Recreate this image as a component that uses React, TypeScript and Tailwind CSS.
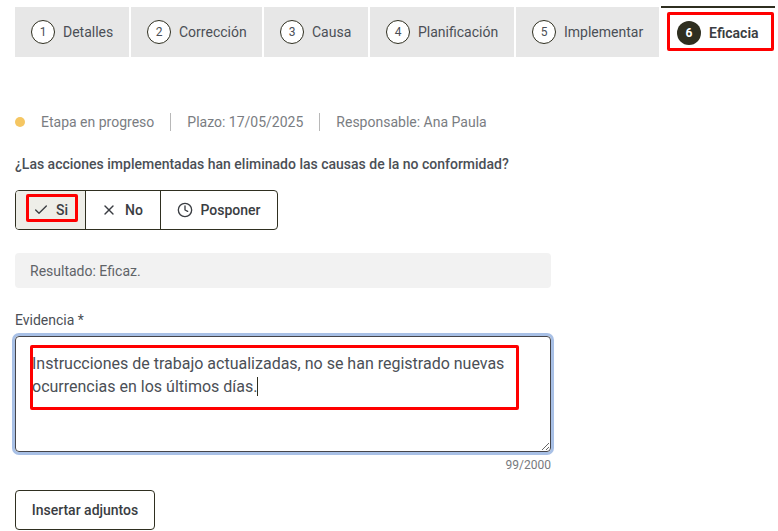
import { Check, Clock, X } from "lucide-react";

const steps = [
  { n: 1, label: "Detalles", width: "w-[114px]" },
  { n: 2, label: "Corrección", width: "w-[131px]" },
  { n: 3, label: "Causa", width: "w-[104px]" },
  { n: 4, label: "Planificación", width: "w-[144px]" },
  { n: 5, label: "Implementar", width: "w-[143px]" },
];

export default function App() {
  return (
    <div className="h-[531px] w-[778px] overflow-hidden bg-white pl-[15px] pt-[6px] font-['Roboto',sans-serif] text-[#4b4f56]">
      <div className="flex gap-[2px]">
        {steps.map((step) => (
          <div
            key={step.n}
            className={`mt-px flex h-[50px] items-center gap-2 bg-[#e7e7e7] pl-4 text-sm ${step.width}`}
          >
            <span className="flex h-6 w-6 items-center justify-center rounded-full border border-[#2f2f20] bg-white text-xs">
              {step.n}
            </span>
            {step.label}
          </div>
        ))}
        <div className="relative flex h-[51px] w-[114px] items-center gap-2 border-t-2 border-[#2f2f20] pl-4 text-sm font-semibold text-[#3a3d42]">
          <span className="flex h-6 w-6 items-center justify-center rounded-full bg-[#2f2f20] text-xs font-bold text-white">
            6
          </span>
          Eficacia
          <div className="absolute left-[6px] top-[4px] h-[39px] w-[107px] rounded-[2px] border-[3px] border-[#ff0000]" />
        </div>
      </div>

      <div className="mt-[56px] flex h-[18px] items-center text-sm text-[#7a7d82]">
        <span className="h-[10px] w-[10px] rounded-full bg-[#f5c662]" />
        <span className="ml-4">Etapa en progreso</span>
        <span className="mx-4 h-[18px] w-px bg-[#b8b8b8]" />
        <span>Plazo: 17/05/2025</span>
        <span className="mx-4 h-[18px] w-px bg-[#b8b8b8]" />
        <span>Responsable: Ana Paula</span>
      </div>

      <p className="mt-[24px] h-[18px] text-sm font-medium leading-[18px]">
        ¿Las acciones implementadas han eliminado las causas de la no conformidad?
      </p>

      <div className="mt-[17px] flex h-10 w-[263px] rounded border border-[#2f2f20] text-sm font-medium text-[#3a3d42]">
        <div className="relative flex w-[69px] items-center justify-center gap-[7px] rounded-l-[3px] bg-[#eeeee8]">
          <Check size={16} strokeWidth={2} />
          Si
          <div className="absolute left-[10px] top-[3px] h-[28px] w-[52px] rounded-[2px] border-[3px] border-[#ff0000]" />
        </div>
        <div className="flex w-[75px] items-center justify-center gap-2 border-l border-[#2f2f20] pr-[2px]">
          <X size={16} strokeWidth={2} />
          No
        </div>
        <div className="flex flex-1 items-center justify-center gap-[7px] border-l border-[#2f2f20]">
          <Clock size={16} strokeWidth={2} />
          Posponer
        </div>
      </div>

      <div className="mt-[23px] flex h-[35px] w-[536px] items-center rounded bg-[#f2f2f2] pl-[15px] text-sm text-[#5f6368]">
        Resultado: Eficaz.
      </div>

      <p className="mt-[23px] h-[18px] text-sm leading-[18px]">Evidencia *</p>

      <div className="relative mt-[7px] h-[116px] w-[536px] resize overflow-auto rounded border border-[#45454a] py-[15px] pl-4 pr-4 text-base leading-[23px] shadow-[0_0_0_3px_#a8c0e6]">
        <p className="w-[490px]">
          Instrucciones de trabajo actualizadas, no se han registrado nuevas ocurrencias en los últimos días.
          <span className="inline-block h-[19px] w-px bg-[#2f2f20] align-text-bottom" />
        </p>
        <div className="absolute left-[14px] top-[8px] h-[65px] w-[489px] rounded-[2px] border-[3px] border-[#ff0000]" />
      </div>

      <p className="mt-[6px] w-[536px] text-right text-xs leading-[14px] text-[#77797d]">99/2000</p>

      <button className="mt-[18px] h-10 w-[140px] rounded border border-[#2f2f20] text-sm font-medium text-[#3a3d42]">
        Insertar adjuntos
      </button>
    </div>
  );
}
